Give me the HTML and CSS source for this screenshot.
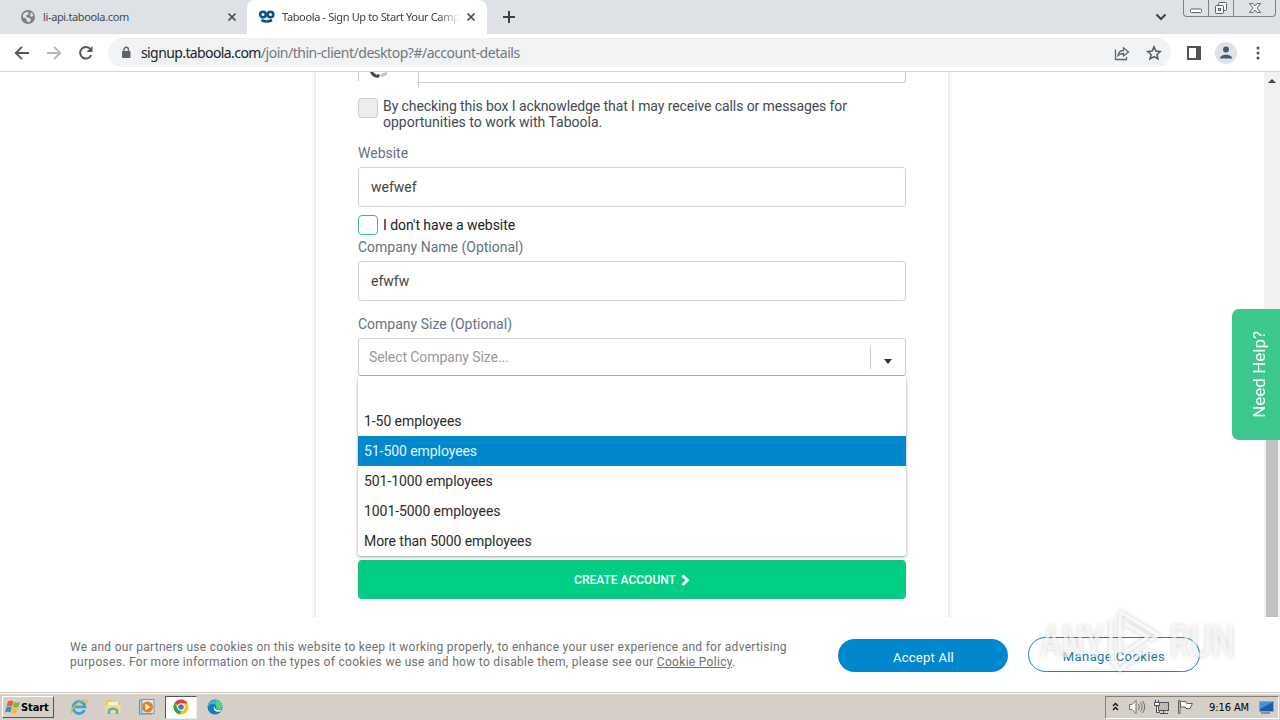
FILE: index.html
```html
<!DOCTYPE html>
<html lang="en">
<head>
    <meta charset="UTF-8">
    <title>Taboola - Sign Up to Start Your Campaign</title>
    <link rel="stylesheet" href="styles.css">
</head>
<body>
    <div class="tab-strip">
        <div class="tab">
            <svg class="tab-icon" width="16" height="16" viewBox="0 0 16 16"><circle cx="8" cy="8" r="7" fill="#7d8084"/><path d="M3 5.500c2-3 5-2.500 5-2.500l1 2-3 1.500 1 2 3 .5 1 2-2 2.500-2-1-1-3-3-1z" fill="#dee1e6"/><path d="M11 3l2.500 3-1.500 2-2-1z" fill="#dee1e6"/></svg>
            <span class="tab-title tab-title-first">li-api.taboola.com</span>
            <svg class="tab-close" width="10" height="10" viewBox="0 0 10 10"><path d="M1.500 1.500l7 7M8.500 1.500l-7 7" stroke="#45494d" stroke-width="1.700"/></svg>
        </div>
        <div class="tab tab-active">
            <svg class="tab-icon" width="18" height="14" viewBox="0 0 18 14" fill="none" stroke="#0b5488"><circle cx="5" cy="4.500" r="2.800" stroke-width="2.600"/><circle cx="12.500" cy="4.500" r="2.800" stroke-width="2.600"/><path d="M3.500 10q5.200 3 10.500 0" stroke-width="2.600"/></svg>
            <span class="tab-title">Taboola - Sign Up to Start Your Camp</span>
            <svg class="tab-close" width="10" height="10" viewBox="0 0 10 10"><path d="M1.500 1.500l7 7M8.500 1.500l-7 7" stroke="#45494d" stroke-width="1.700"/></svg>
        </div>
        <svg class="new-tab" width="14" height="14" viewBox="0 0 14 14"><path d="M7 1v12M1 7h12" stroke="#3c4043" stroke-width="2"/></svg>
        <svg class="tab-search" width="12" height="8" viewBox="0 0 12 8"><path d="M1.500 1.500L6 6l4.500-4.500" fill="none" stroke="#3c4043" stroke-width="2"/></svg>
        <div class="window-buttons">
            <span class="win-btn win-min"><svg width="14" height="6" viewBox="0 0 14 6"><rect x="1.500" y="1" width="11" height="3.500" rx="1" fill="#fff" stroke="#5d6066"/></svg></span>
            <span class="win-btn win-max"><svg width="14" height="14" viewBox="0 0 14 14" fill="#f4f5f7" stroke="#5d6066"><rect x="4.500" y="1.500" width="8" height="8" rx="1"/><rect x="1.500" y="4.500" width="8" height="8" rx="1"/><rect x="4.500" y="7.500" width="2" height="2"/></svg></span>
            <span class="win-btn win-close"><svg width="14" height="12" viewBox="0 0 14 12"><path d="M1.500 1.500h3.500l2 2.500 2-2.500h3.500L9 6l3.500 4.500H9L7 8l-2 2.500H1.500L5 6z" fill="#fff" stroke="#6b6e74"/></svg></span>
        </div>
    </div>

    <div class="toolbar">
        <svg class="nav-icon" width="16" height="16" viewBox="0 0 16 16"><path d="M15 8H2.500M8 1.800L1.800 8 8 14.200" fill="none" stroke="#55585c" stroke-width="1.900"/></svg>
        <svg class="nav-icon" width="16" height="16" viewBox="0 0 16 16"><path d="M1 8h12.500M8 1.800L14.200 8 8 14.200" fill="none" stroke="#b6b8ba" stroke-width="1.900"/></svg>
        <svg class="nav-icon" width="16" height="16" viewBox="0 0 16 16"><path d="M13.200 10.200A5.800 5.800 0 1 1 12.500 4.200" fill="none" stroke="#55585c" stroke-width="2"/><path d="M14.500 1v6h-6z" fill="#55585c"/></svg>
        <div class="address-bar">
            <svg width="10" height="13" viewBox="0 0 10 13"><rect x="1" y="5" width="8.500" height="7" rx="1" fill="#5f6368"/><path d="M3 5.500V3.500a2.200 2.200 0 0 1 4.400 0v2" fill="none" stroke="#5f6368" stroke-width="1.400"/></svg>
            <span class="url"><span class="url-host">signup.taboola.com</span><span class="url-path">/join/thin-client/desktop?#/account-details</span></span>
            <svg class="share" width="16" height="16" viewBox="0 0 16 16" fill="none" stroke="#606367" stroke-width="1.300"><path d="M1.500 4.500v10h11v-2.500"/><path d="M4 10.500c.5-3.500 2.500-5 5.500-5V2.800L14.500 7l-5 4V8.500C7 8.500 5.500 9 4 10.500z"/></svg>
            <svg width="16" height="16" viewBox="0 0 16 16"><path d="M8 1.800l1.800 4.300 4.600.4-3.500 3 1.100 4.500L8 11.600 4 14l1.100-4.500-3.500-3 4.600-.4z" fill="none" stroke="#55585c" stroke-width="1.500"/></svg>
        </div>
        <svg class="side-panel" width="14" height="14" viewBox="0 0 14 14"><path d="M1 1h12v12H1z" fill="none" stroke="#505357" stroke-width="2"/><path d="M9 1h4v12H9z" fill="#505357"/></svg>
        <svg class="avatar" width="22" height="22" viewBox="0 0 22 22"><circle cx="11" cy="11" r="11" fill="#dfe2e7"/><circle cx="11" cy="7.500" r="3" fill="#4b5872"/><path d="M5 16.500c0-5 12-5 12 0z" fill="#4b5872"/></svg>
        <svg class="menu-dots" width="4" height="14" viewBox="0 0 4 14" fill="#505357"><circle cx="2" cy="2" r="1.500"/><circle cx="2" cy="7" r="1.500"/><circle cx="2" cy="12" r="1.500"/></svg>
    </div>

    <div class="viewport">
        <div class="page">
            <form class="signup-card">
                <div class="phone-row">
                    <div class="phone-code"><svg width="24" height="9" viewBox="0 0 24 9"><path d="M2 0c1 3 4 6.500 9 5.500l1-2.500-2-1-1.500 1L5 0z" fill="#494949"/><path d="M12.500 3l2-2 5-1-1 3-5 2.500z" fill="#c5c5c5"/></svg></div>
                    <div class="phone-number"></div>
                </div>
                <div class="check-row consent">
                    <span class="checkbox checkbox-disabled"></span>
                    <p><span class="consent-one">By checking this box I acknowledge that I may receive calls or messages for</span><br><span class="consent-two">opportunities to work with Taboola.</span></p>
                </div>
                <label class="label-website">Website</label>
                <div class="input">wefwef</div>
                <div class="check-row no-site">
                    <span class="checkbox"></span>
                    <p>I don't have a website</p>
                </div>
                <label class="label-name">Company Name (Optional)</label>
                <div class="input">efwfw</div>
                <label class="label-size">Company Size (Optional)</label>
                <div class="select">
                    <span class="select-text">Select Company Size...</span>
                    <span class="select-arrow"></span>
                    <ul class="options">
                        <li></li>
                        <li>1-50 employees</li>
                        <li class="selected">51-500 employees</li>
                        <li>501-1000 employees</li>
                        <li>1001-5000 employees</li>
                        <li>More than 5000 employees</li>
                    </ul>
                </div>
                <div class="submit">
                    <span>CREATE ACCOUNT</span>
                    <svg width="9" height="12" viewBox="0 0 9 12"><path d="M1.500 1.500L6.500 6.300l-5 4.800" fill="none" stroke="#fff" stroke-width="2.600"/></svg>
                </div>
            </form>
        </div>
        <div class="scrollbar">
            <span class="scroll-up"></span>
            <span class="scroll-thumb"></span>
        </div>
        <div class="help-tab"><span>Need Help?</span></div>
    </div>

    <div class="cookie-bar">
        <p><span class="cookie-one">We and our partners use cookies on this website to keep it working properly, to enhance your user experience and for advertising</span><br><span class="cookie-two">purposes. For more information on the types of cookies we use and how to disable them, please see our <u>Cookie Policy</u>.</span></p>
        <div class="pill pill-accept">Accept All</div>
        <div class="pill pill-manage">Manage Cookies</div>
        <div class="watermark">
            <span>ANY</span>
            <svg width="58" height="64" viewBox="0 0 58 64" fill="none" stroke="#fff" stroke-width="3.500" stroke-linejoin="round"><path d="M14 3l38 23-8 5M14 3v42"/><path d="M20 15l22 13-22 15"/><path d="M5 11v40l9 10 28-22"/></svg>
            <span>RUN</span>
        </div>
    </div>

    <div class="taskbar">
        <div class="start">
            <svg width="16" height="16" viewBox="0 0 16 16"><path d="M3 2.500q3-2 5.500 0L7 7.500q-2.500-1.500-5.500 0z" fill="#e8602c"/><path d="M9.300 3q2.500 1.500 5.700 0l-1.500 5q-3 1.500-5.600 0z" fill="#7fb93c"/><path d="M1.300 8.500q3-1.800 5.500 0L5.300 13.500q-2.500-1.500-5.300 0z" fill="#3d8ad0"/><path d="M7.600 9q2.500 1.500 5.700 0l-1.500 5q-3 1.500-5.600 0z" fill="#f4bd2c"/></svg>
            <span>Start</span>
        </div>
        <div class="quick-launch">
            <span class="app"><svg width="18" height="18" viewBox="0 0 18 18" fill="none"><path d="M14.500 12A6 6 0 1 1 15 8.800H5" stroke="#38a3dd" stroke-width="2.800"/><path d="M2 15.500C-1 12 10 1 16 2c1.500.5 1 2.500 0 4" stroke="#e9b83a" stroke-width="1.300"/></svg></span>
            <span class="app"><svg width="18" height="18" viewBox="0 0 18 18"><path d="M2 2h6l1 2h7v5H2z" fill="#e7c667"/><path d="M4 4h10v4H4z" fill="#fbf3c8"/><path d="M1.500 7h15v8h-15z" fill="#f3dc8b"/><path d="M5 16v-4q4-2.500 8 0v4" fill="none" stroke="#61a9d4" stroke-width="2.400"/></svg></span>
            <span class="app"><svg width="18" height="18" viewBox="0 0 18 18"><rect x="1.500" y="2" width="12" height="14" fill="#acd1ee" stroke="#5b93c4"/><rect x="4" y="1.500" width="12" height="14" fill="#d8e9f6" stroke="#6a9cc8"/><circle cx="9.500" cy="9" r="5.500" fill="#f07c16"/><path d="M7.500 5.800l5 3.200-5 3.200z" fill="#fff"/></svg></span>
            <span class="app app-running"><svg width="18" height="18" viewBox="0 0 18 18"><circle cx="9" cy="9" r="7.500" fill="#f7c31b"/><path d="M9 9L2.500 5.250A7.500 7.500 0 0 1 15.500 5.250H9z" fill="#e33b2e"/><path d="M2.500 5.250L6 11l3 2-1 3.400A7.500 7.500 0 0 1 2.500 5.250z" fill="#2da24c"/><circle cx="9" cy="9" r="3.700" fill="#fff"/><circle cx="9" cy="9" r="2.800" fill="#3a78e2"/></svg></span>
            <span class="app"><svg width="18" height="18" viewBox="0 0 18 18"><circle cx="9" cy="9" r="7.500" fill="#1878c8"/><path d="M1.800 7C4 .5 15.500.2 16.500 8c0 3-4 4-6.500 3 2-2-.5-5.500-4-5q-2.500.2-4.200 3z" fill="#37b9c6"/><path d="M10 2q6 1 6.500 6c0 3-4 4-6.500 3q1-1 .5-2.500z" fill="#58cf7c"/><path d="M9 7c-1.500 2 .5 5.500 4.500 5q1.500 0 2.300-.8-.5 1.300-1.600 2.300C9 15 6 11 9 7z" fill="#dff0fa"/></svg></span>
        </div>
        <div class="tray">
            <svg class="tray-more" width="7" height="10" viewBox="0 0 7 10" fill="none" stroke="#111" stroke-width="1.300"><path d="M1 4l2.500-2.500L6 4M1 8l2.500-2.500L6 8"/></svg>
            <svg class="tray-sound" width="18" height="16" viewBox="0 0 18 16" stroke="#6e6e6e"><path d="M1.500 5.500H4L8 1.500v13L4 10.500H1.500z" fill="#fff"/><path d="M10.500 5q2 3 0 6M12.500 3.500q3.500 4.500 0 9M14.500 2q4.500 6 0 12" fill="none"/></svg>
            <svg class="tray-net" width="17" height="16" viewBox="0 0 17 16" stroke="#505050"><rect x="5.500" y="3.500" width="10" height="8" fill="#bbb"/><path d="M7 14.500h8M10.500 12v2" fill="none"/><path d="M1.500 3.500h5v3h-5zM2.500 1v2.500M5.500 1v2.500M3.500 7v6.500h3v-2h-1V7z" fill="#fff"/></svg>
            <svg class="tray-flag" width="16" height="16" viewBox="0 0 16 16" stroke="#606060" fill="#fff"><path d="M1.500 1.500h1.500v13H1.500z"/><path d="M3.500 2.500H9l1 2h5.500l-2.500 5H9l-1-1.500H3.500z"/></svg>
            <span class="clock">9:16 AM</span>
            <svg class="tray-desktop" width="15" height="13" viewBox="0 0 15 13"><rect x=".5" y=".5" width="14" height="10" fill="#1c5cae" stroke="#7da9d3"/><path d="M1 1h13L1 8z" fill="#4a8edb"/><path d="M2 12h9" stroke="#37506e"/></svg>
        </div>
    </div>
</body>
</html>
```
FILE: styles.css
```css
* {
    box-sizing: border-box;
}
body {
    margin: 0;
    width: 1280px;
    height: 720px;
    overflow: hidden;
    display: flex;
    flex-direction: column;
    background: #fff;
    font-family: Roboto, "Liberation Sans", sans-serif;
    font-size: 14px;
    color: #333;
}
svg {
    display: block;
    flex: none;
}
p, ul {
    margin: 0;
    padding: 0;
}

/* Browser tabs */
.tab-strip {
    height: 34px;
    flex: none;
    display: flex;
    align-items: center;
    background: #dee1e6;
    font-family: "Noto Sans", sans-serif;
    font-size: 11px;
}
.tab {
    width: 247px;
    height: 34px;
    display: flex;
    align-items: center;
    padding: 0 10px 0 20px;
    color: #45494d;
}
.tab-active {
    width: 240px;
    padding: 0 11px;
    background: #fff;
    border-radius: 8px 8px 0 0;
    color: #3c4043;
}
.tab-title {
    flex: 1;
    margin-left: 6px;
    margin-right: 6px;
    padding-bottom: 1px;
    white-space: nowrap;
    letter-spacing: -0.36px;
}
.tab-title-first {
    margin-left: 7px;
    letter-spacing: -0.36px;
}
.tab-active .tab-title {
    -webkit-mask-image: linear-gradient(90deg, #000 88%, transparent);
    mask-image: linear-gradient(90deg, #000 88%, transparent);
}
.new-tab {
    margin-left: 15px;
}
.tab-search {
    margin-left: auto;
    margin-right: 16px;
}
.window-buttons {
    display: flex;
    align-self: flex-start;
    width: 93px;
    height: 17px;
    margin-right: 4px;
    border: 1px solid #7e8187;
    border-top: 0;
    border-radius: 0 0 4px 4px;
}
.win-btn {
    display: flex;
    justify-content: center;
    align-items: center;
    width: 25px;
    border-right: 1px solid #7e8187;
}
.win-min {
    padding-top: 5px;
}
.win-close {
    width: 41px;
    border-right: 0;
}

/* Toolbar */
.toolbar {
    height: 38px;
    flex: none;
    display: flex;
    align-items: center;
    padding: 0 20px 0 14px;
    border-bottom: 1px solid #d5d6d8;
}
.nav-icon {
    margin-right: 16px;
}
.address-bar {
    display: flex;
    align-items: center;
    width: 1063px;
    height: 29px;
    margin-left: -2px;
    padding: 0 9px 0 13px;
    border-radius: 15px;
    background: #f1f3f4;
}
.url {
    flex: 1;
    margin-left: 10px;
    font-family: "Noto Sans", sans-serif;
    font-size: 14px;
    white-space: nowrap;
    color: #73777c;
}
.url-host {
    color: #202124;
    letter-spacing: -0.6px;
}
.url-path {
    letter-spacing: -0.47px;
}
.share {
    margin-right: 16px;
}
.side-panel {
    margin-left: 16px;
}
.avatar {
    margin-left: 14px;
}
.menu-dots {
    margin-left: auto;
}

/* Page */
.viewport {
    position: relative;
    display: flex;
    height: 545px;
    flex: none;
}
.page {
    flex: 1;
    display: flex;
    overflow: hidden;
}
.signup-card {
    width: 632px;
    margin-left: 316px;
    padding: 0 42px;
    box-shadow: 0 0 0 2px #ececec, 0 0 0 4px #f8f8f8;
}
.phone-row {
    display: flex;
    height: 16px;
}
.phone-code {
    width: 61px;
    height: 16px;
    padding-left: 10px;
    border-right: 1px solid #ccc;
    background: linear-gradient(#ccc, #ccc) 0 0 / 1px 9px no-repeat;
}
.phone-number {
    flex: 1;
    height: 11px;
    border: solid #ccc;
    border-width: 0 1px 1px 0;
    border-radius: 0 0 3px 0;
}
.check-row {
    display: flex;
    gap: 5px;
    line-height: 16px;
}
.consent {
    margin-top: 10px;
    color: #424a55;
}
.consent-one {
    letter-spacing: -0.09px;
}
.checkbox {
    flex: none;
    width: 20px;
    height: 20px;
    border: 1px solid #3cb996;
    border-radius: 4px;
}
.checkbox-disabled {
    border-color: #ccc;
    background: #eee;
}
.no-site {
    margin-top: 8px;
    align-items: center;
    color: #222;
    letter-spacing: -0.04px;
}
label {
    display: block;
    line-height: 16px;
    color: #667282;
}
.label-website {
    margin-top: 15px;
}
.label-name {
    margin-top: 4px;
}
.label-size {
    margin-top: 15px;
}
.input {
    height: 40px;
    margin-top: 6px;
    padding-left: 12px;
    border: 1px solid #d2d2d2;
    border-radius: 3px;
    line-height: 38px;
    color: #444;
}
.select {
    position: relative;
    display: flex;
    align-items: center;
    height: 38px;
    margin-top: 6px;
    border: 1px solid #d2d2d2;
    border-bottom-color: #aaa;
    border-radius: 3px;
}
.select-text {
    flex: 1;
    padding-left: 10px;
    color: #989898;
    letter-spacing: -0.09px;
}
.select-arrow {
    display: flex;
    justify-content: center;
    align-items: center;
    width: 35px;
    height: 23px;
    border-left: 1px solid #ccc;
}
.select-arrow::before {
    content: "";
    margin-top: 9px;
    border: 4px solid transparent;
    border-top: 5px solid #333;
    border-bottom: 0;
}
.options {
    position: absolute;
    top: 37px;
    left: -1px;
    width: 548px;
    height: 180px;
    list-style: none;
    background: #fff;
    border-radius: 0 0 3px 3px;
    box-shadow: 0 1px 3px rgba(0, 0, 0, 0.4);
    clip-path: inset(0 -6px -6px -6px);
    color: #2b2b2b;
    letter-spacing: -0.07px;
}
.options li {
    height: 30px;
    padding-left: 6px;
    line-height: 30px;
}
.options .selected {
    background: #0088cf;
    color: #e4f6ff;
}
.submit {
    display: flex;
    justify-content: center;
    align-items: center;
    gap: 5px;
    height: 39px;
    margin-top: 184px;
    border: 1px solid #1fbd80;
    border-radius: 3px;
    background: #00ce84;
    background-clip: padding-box;
    color: #fff;
    font-size: 12px;
    font-weight: 500;
}
.scrollbar {
    width: 16px;
    display: flex;
    flex-direction: column;
    align-items: center;
    background: #f1f1f1;
}
.scroll-up {
    margin: 7px 0 0;
    border: 4px solid transparent;
    border-top: 0;
    border-bottom: 4px solid #444;
}
.scroll-thumb {
    width: 12px;
    flex: 1;
    margin-top: 289px;
    background: #c1c1c1;
}
.help-tab {
    position: absolute;
    right: 0;
    top: 237px;
    width: 48px;
    height: 131px;
    display: flex;
    justify-content: center;
    align-items: center;
    padding-left: 6px;
    border-radius: 7px 0 0 7px;
    background: #3cc78d;
    color: #fff;
    font-size: 17px;
}
.help-tab span {
    writing-mode: vertical-rl;
    transform: rotate(180deg);
    white-space: nowrap;
}

/* Cookie bar */
.cookie-bar {
    position: relative;
    display: flex;
    height: 75px;
    flex: none;
    background: #fff;
    padding-left: 70px;
}
.cookie-bar p {
    width: 768px;
    padding-top: 23px;
    font-size: 12px;
    line-height: 15px;
    white-space: nowrap;
    color: #707070;
}
.cookie-one {
    letter-spacing: 0.275px;
}
.cookie-two {
    letter-spacing: 0.305px;
}
.pill {
    display: flex;
    justify-content: center;
    align-items: center;
    border-radius: 18px;
    font-size: 13px;
}
.pill-accept {
    width: 170px;
    height: 33px;
    margin-top: 22px;
    padding: 4px 0 0 1px;
    background: #0088cf;
    color: #fff;
    letter-spacing: 0.25px;
}
.pill-manage {
    width: 172px;
    height: 35px;
    margin: 20px 0 0 20px;
    padding-top: 4px;
    border: 1px solid #1788c0;
    color: #1779ab;
    letter-spacing: 0.4px;
}
.watermark {
    position: absolute;
    left: 1040px;
    top: -8px;
    display: flex;
    align-items: center;
    color: rgba(255, 255, 255, 0.6);
    font-size: 45px;
    font-weight: 500;
    filter: drop-shadow(0 0 2px rgba(0, 0, 0, 0.28));
}
.watermark span {
    display: block;
    width: 66px;
    transform: scaleX(0.72);
    transform-origin: left;
}
.watermark svg {
    margin-right: 6px;
    opacity: 0.75;
}

/* Taskbar */
.taskbar {
    display: flex;
    align-items: center;
    height: 28px;
    flex: none;
    padding: 1px 1px 0 2px;
    background: #d5cfc7;
    border-top: 1px solid #c4c3bf;
    box-shadow: inset 0 1px #fff;
    color: #000;
}
.start {
    display: flex;
    align-items: center;
    width: 52px;
    height: 22px;
    padding-left: 2px;
    border: 1px solid;
    border-color: #fff #555 #555 #fff;
    font: bold 11px "DejaVu Sans Condensed", "DejaVu Sans", sans-serif;
    letter-spacing: -0.1px;
}
.quick-launch {
    display: flex;
    margin-left: 8px;
}
.app {
    display: flex;
    justify-content: center;
    align-items: center;
    width: 34px;
    height: 23px;
}
.app-running {
    width: 32px;
    margin: 0 1px;
    background: #fff;
    border: 1px solid;
    border-color: #555 #eee #eee #555;
}
.tray {
    display: flex;
    align-items: center;
    width: 174px;
    height: 23px;
    margin-left: auto;
    padding: 0 4px 0 6px;
    border: 1px solid;
    border-color: #85817a #fff #fff #85817a;
}
.tray-more {
    margin-right: 9px;
}
.tray-sound {
    margin-right: 7px;
}
.tray-net {
    margin-right: 7px;
}
.clock {
    margin-left: auto;
    font: 11px "DejaVu Sans Condensed", "DejaVu Sans", sans-serif;
    letter-spacing: -0.1px;
}
.tray-desktop {
    margin-left: 10px;
}
```
